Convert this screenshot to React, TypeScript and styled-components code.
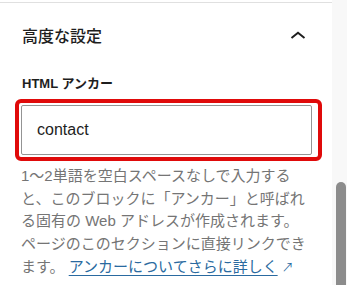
import React from "react";
import styled, { createGlobalStyle } from "styled-components";

const Global = createGlobalStyle`
  html, body { margin: 0; padding: 0; background: #ffffff; }
  body { font-family: "Liberation Sans", "Noto Sans CJK JP", sans-serif; }
  * { box-sizing: border-box; }
`;

const Frame = styled.div`
  display: flex;
  width: 347px;
  height: 285px;
  overflow: hidden;
  background: #ffffff;
`;

const Panel = styled.section`
  width: 332px;
  flex: none;
  padding-top: 2px;
  background: #ffffff;
`;

const Section = styled.div`
  border-top: 1px solid #e0e0e0;
`;

const Header = styled.div`
  display: flex;
  align-items: center;
  justify-content: space-between;
  height: 64px;
  padding: 0 26px 0 22px;
`;

const Title = styled.h2`
  margin: 0;
  padding-top: 4px;
  font-size: 16px;
  font-weight: 500;
  color: #1e1e1e;
  line-height: 24px;
`;

const Body = styled.div`
  display: flex;
  flex-direction: column;
  padding: 8px 20px 0 21px;
`;

const Label = styled.label`
  font-size: 13px;
  font-weight: 600;
  color: #1e1e1e;
  line-height: 18px;
  padding-left: 1px;
`;

const Highlight = styled.div`
  margin: 6px 0 0 -6px;
  width: 307px;
  border: 4px solid #e00a0a;
  border-radius: 6px;
  padding: 2px 6px 2px 2px;
`;

const Input = styled.input`
  display: block;
  width: 291px;
  height: 50px;
  border: 1px solid #949494;
  border-radius: 2px;
  padding: 0 15px;
  font-family: "Liberation Sans", "Noto Sans CJK JP", sans-serif;
  font-size: 16px;
  color: #1e1e1e;
  background: #ffffff;
  outline: none;
`;

const Help = styled.p`
  margin: 4px 0 0 0;
  width: 291px;
  font-size: 15px;
  line-height: 22.7px;
  color: #757575;
`;

const Link = styled.a`
  color: #2a6aa0;
  text-decoration: underline;
  text-underline-offset: 3px;
  text-decoration-thickness: 1px;
`;

const Arrow = styled.span`
  display: inline-block;
  color: #2a6aa0;
  font-size: 12px;
  line-height: 1;
  margin-left: 4px;
`;

const ScrollTrack = styled.div`
  flex: 1;
  background: #f8f8f8;
  display: flex;
  flex-direction: column;
  padding: 182px 1px 0 4px;
`;

const Thumb = styled.div`
  flex: 1;
  background: #8c8c8c;
  border-radius: 5px 5px 0 0;
`;

const Chevron = () => (
  <svg width="16" height="8" viewBox="0 0 16 8" aria-hidden="true">
    <path d="M1.5 7 L8 1.8 L14.5 7" fill="none" stroke="#1e1e1e" strokeWidth="2" />
  </svg>
);

export default function App() {
  return (
    <Frame>
      <Global />
      <Panel>
        <Section>
          <Header>
            <Title>高度な設定</Title>
            <Chevron />
          </Header>
          <Body>
            <Label htmlFor="anchor">HTML アンカー</Label>
            <Highlight>
              <Input id="anchor" defaultValue="contact" />
            </Highlight>
            <Help>
              1〜2単語を空白スペースなしで入力すると、このブロックに「アンカー」と呼ばれる固有の Web アドレスが作成されます。ページのこのセクションに直接リンクできます。{" "}
              <Link href="#">アンカーについてさらに詳しく</Link>
              <Arrow>↗</Arrow>
            </Help>
          </Body>
        </Section>
      </Panel>
      <ScrollTrack>
        <Thumb />
      </ScrollTrack>
    </Frame>
  );
}
